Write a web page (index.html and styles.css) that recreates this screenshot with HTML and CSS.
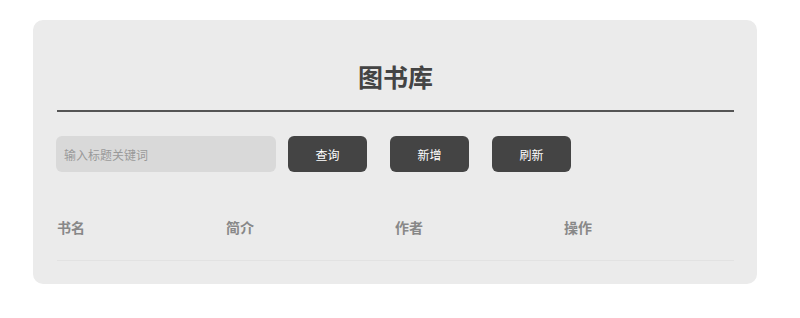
FILE: index.html
```html
<!DOCTYPE html>
<html lang="zh">
<head>
<meta charset="utf-8">
<title>图书库</title>
<link rel="stylesheet" href="styles.css">
</head>
<body>
<div class="card">
  <h1 class="title">图书库</h1>
  <div class="toolbar">
    <input class="search" type="text" placeholder="输入标题关键词">
    <button class="btn btn-first">查询</button>
    <button class="btn">新增</button>
    <button class="btn">刷新</button>
  </div>
  <div class="table-head">
    <div class="col">书名</div>
    <div class="col">简介</div>
    <div class="col">作者</div>
    <div class="col">操作</div>
  </div>
</div>
</body>
</html>
```
FILE: styles.css
```css
* { box-sizing: border-box; }
html, body { margin: 0; padding: 0; background: #fff; }
body {
  font-family: "Noto Sans CJK SC", "Noto Sans", sans-serif;
  padding-top: 20px;
}
.card {
  width: 724px;
  margin-left: 33px;
  background: #ebebeb;
  border-radius: 10px;
  padding: 38px 23px 23px 24px;
  height: 264px;
}
.title {
  margin: 0;
  text-align: center;
  font-size: 25px;
  font-weight: 700;
  color: #444;
  line-height: 36px;
  padding-bottom: 16px;
  border-bottom: 2px solid #555;
}
.toolbar {
  display: flex;
  align-items: center;
  margin-top: 24px;
}
.search {
  width: 220px;
  height: 36px;
  border: none;
  border-radius: 6px;
  background: #d9d9d9;
  padding: 0 8px;
  font-family: inherit;
  font-size: 12px;
  color: #444;
  outline: none;
  margin-left: -1px;
}
.search::placeholder { color: #999; }
.btn {
  width: 79px;
  height: 36px;
  border: none;
  border-radius: 6px;
  background: #444;
  color: #fff;
  font-family: inherit;
  font-size: 12px;
  margin-left: 23px;
}
.btn-first { margin-left: 12px; }
.table-head {
  display: flex;
  margin-top: 37px;
  height: 52px;
  border-bottom: 1px solid #e2e2e2;
}
.col {
  width: 169px;
  font-size: 14px;
  font-weight: 700;
  color: #888;
  line-height: 36px;
}
```
